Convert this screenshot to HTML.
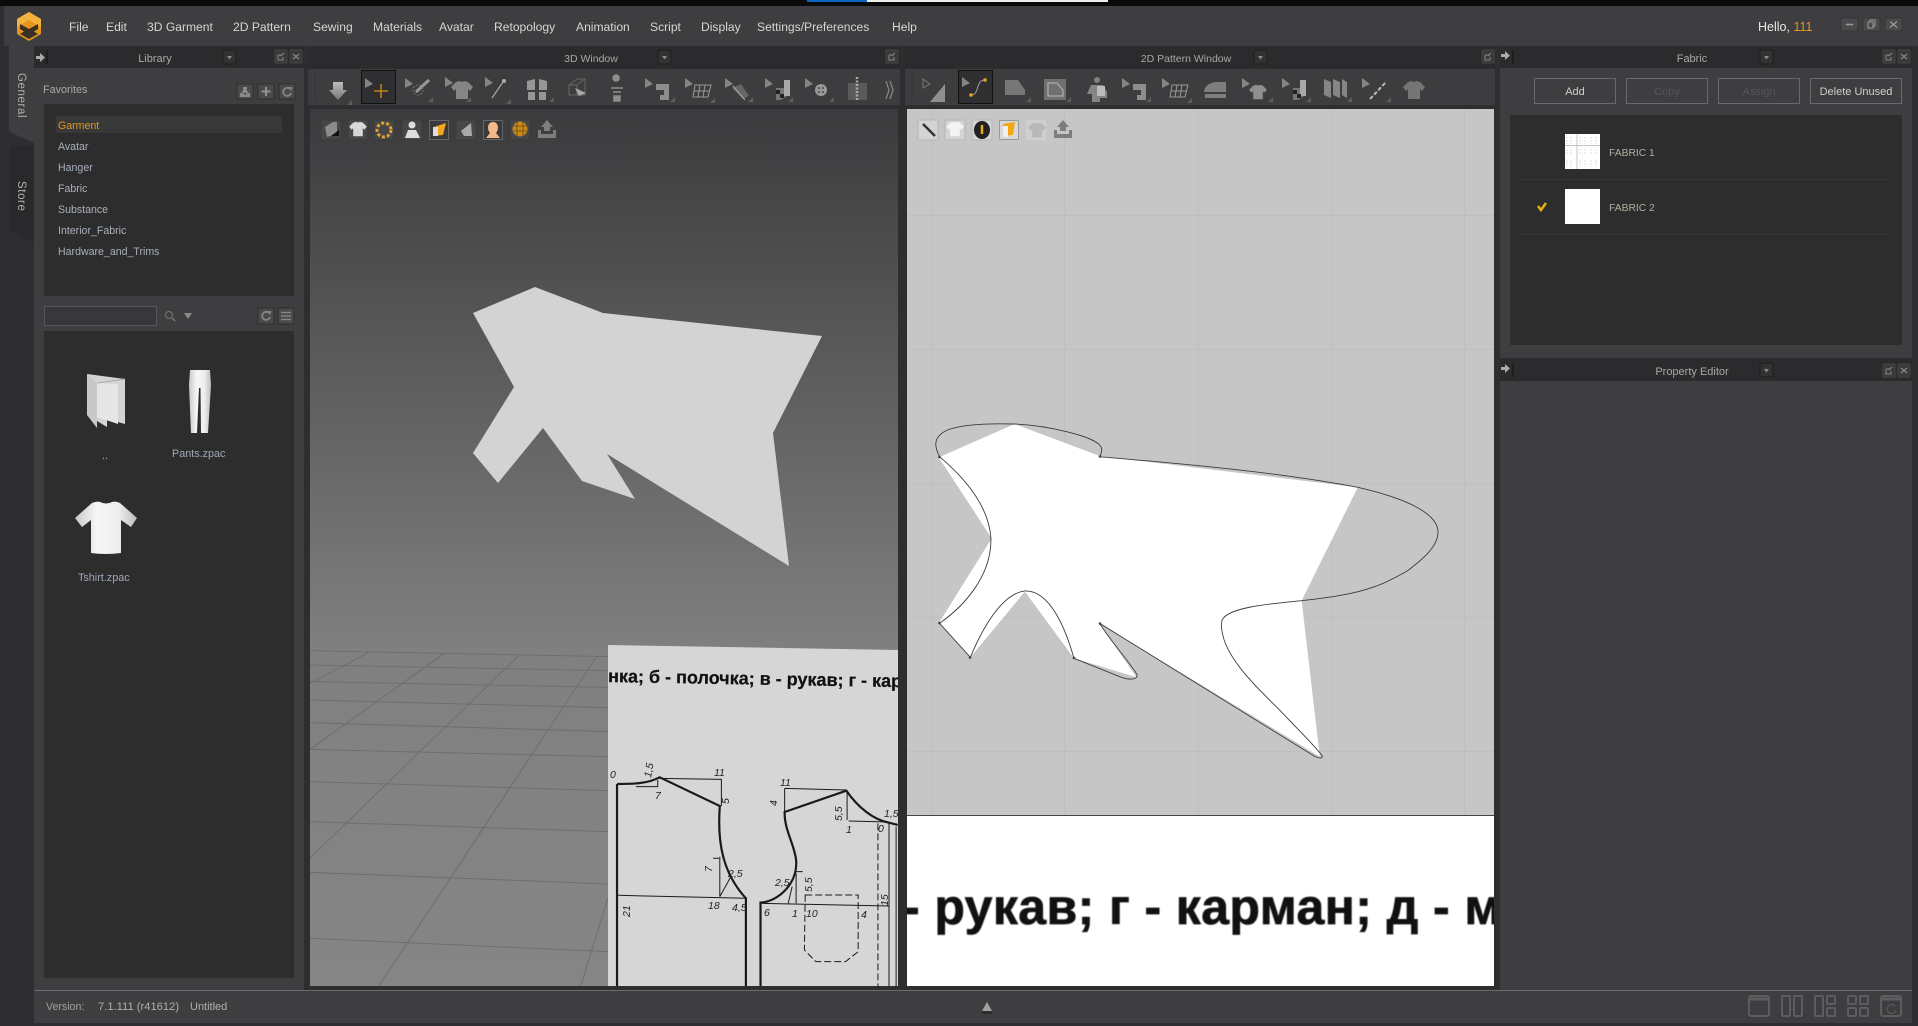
<!DOCTYPE html>
<html><head><meta charset="utf-8"><title>CLO</title>
<style>
html,body{margin:0;padding:0;background:#2e2e30;width:1918px;height:1026px;overflow:hidden}
body{position:relative;font-family:"Liberation Sans","Noto Sans CJK SC",sans-serif;font-size:11px;color:#b4b8bd}
.b{position:absolute}
.t{position:absolute;white-space:nowrap;line-height:14px}
.m{top:20px;font-size:12.1px;color:#d6d6d6}
.h{top:51.5px;font-size:11px;color:#a8a8a8;transform:translateX(-50%)}
.l{left:58px;color:#a9b0ba;font-size:10.6px}
.btn{position:absolute;top:78px;height:26px;border:1px solid #6a6a6c;box-sizing:border-box;text-align:center;line-height:26px;color:#cfcfcf;font-size:11px}
.dim{color:#555658}
svg{position:absolute;left:0;top:0}
</style></head><body>
<!-- top -->
<div class="b" style="left:0;top:0;width:1918px;height:6px;background:#0a0a0a"></div>
<div class="b" style="left:807px;top:0;width:60px;height:1.5px;background:#0a64c0"></div>
<div class="b" style="left:867px;top:0;width:241px;height:1.5px;background:#eee"></div>
<div class="b" style="left:4px;top:6px;width:1914px;height:40px;background:#3e3e40"></div>
<!-- left rail -->
<div class="b" style="left:0;top:46px;width:34px;height:980px;background:#2e2e30"></div>
<!-- library -->
<div class="b" style="left:34px;top:46px;width:270px;height:22px;background:#2b2b2d"></div>
<div class="b" style="left:34px;top:68px;width:270px;height:922px;background:#3e3e40"></div>
<div class="b" style="left:44px;top:104px;width:250px;height:192px;background:#2d2d2d"></div>
<div class="b" style="left:56px;top:116px;width:226px;height:17px;background:#383838"></div>
<div class="b" style="left:44px;top:306px;width:113px;height:20px;box-sizing:border-box;border:1px solid #565658;background:#38383a"></div>
<div class="b" style="left:44px;top:331px;width:250px;height:647px;background:#2d2d2d"></div>
<!-- 3D -->
<div class="b" style="left:309px;top:46px;width:591px;height:22px;background:#2b2b2d"></div>
<div class="b" style="left:308px;top:69px;width:592px;height:36px;background:#3d3d3f"></div>
<div class="b" style="left:310px;top:109px;width:588px;height:877px;background:linear-gradient(#3b3b3d 0,#808080 62%,#858585 100%)"></div>
<!-- 2D -->
<div class="b" style="left:905px;top:46px;width:590px;height:22px;background:#2b2b2d"></div>
<div class="b" style="left:905px;top:69px;width:590px;height:36px;background:#3d3d3f"></div>
<div class="b" style="left:907px;top:109px;width:587px;height:706px;background:#c6c6c6"></div>
<div class="b" style="left:907px;top:815px;width:587px;height:1px;background:#444"></div>
<div class="b" style="left:907px;top:816px;width:587px;height:170px;background:#fff;overflow:hidden">
 <div class="t" style="left:-4px;top:63px;font-size:50px;line-height:56px;font-weight:bold;color:#111;letter-spacing:.4px;-webkit-text-stroke:.7px #111;filter:blur(.4px)">- рукав; г - карман; д - м</div>
</div>
<!-- right -->
<div class="b" style="left:1500px;top:46px;width:412px;height:22px;background:#2b2b2d"></div>
<div class="b" style="left:1500px;top:68px;width:412px;height:290px;background:#3e3e40"></div>
<div class="b" style="left:1510px;top:115px;width:392px;height:230px;background:#2d2d2d"></div>
<div class="b" style="left:1520px;top:179px;width:372px;height:1px;background:#363638"></div>
<div class="b" style="left:1520px;top:234px;width:372px;height:1px;background:#363638"></div>
<div class="b" style="left:1565px;top:189px;width:35px;height:35px;background:#fff"></div>
<div class="b" style="left:1500px;top:359px;width:412px;height:22px;background:#2b2b2d"></div>
<div class="b" style="left:1500px;top:381px;width:412px;height:609px;background:#3e3e40"></div>
<!-- status -->
<div class="b" style="left:34px;top:990px;width:1878px;height:33px;background:#3e3e40;border-top:1px solid #6b6b6d;box-sizing:border-box"></div>

<svg width="1918" height="1026" viewBox="0 0 1918 1026">
<defs>
 <linearGradient id="ig" x1="0" y1="0" x2="0" y2="1"><stop offset="0" stop-color="#bcbcbc"/><stop offset="1" stop-color="#777"/></linearGradient>
 <linearGradient id="wg" x1="0" y1="0" x2="1" y2="0"><stop offset="0" stop-color="#c8c8c8"/><stop offset=".35" stop-color="#f6f6f6"/><stop offset=".7" stop-color="#eeeeee"/><stop offset="1" stop-color="#bdbdbd"/></linearGradient>
 <g id="ptr"><path d="M0 0L0 10L8 6Z" fill="#858585"/></g>
 <g id="cor"><path d="M5 0L5 5L0 5Z" fill="#5e5e5e"/></g>
 <g id="float"><rect x="0" y="0" width="12" height="13" rx="1" fill="#3a3a3c" stroke="#444"/><path d="M3 5H7M3 5V10H8V7M6 6L9 3" stroke="#888" fill="none"/></g>
 <g id="close"><rect x="0" y="0" width="12" height="13" rx="1" fill="#3a3a3c" stroke="#444"/><path d="M3 4L9 9M9 4L3 9" stroke="#888" stroke-width="1.2"/></g>
 <g id="drop"><rect x="0" y="0" width="13" height="14" rx="2" fill="#323234" stroke="#1d1d1d"/><path d="M4 6H9L6.5 9.5Z" fill="#8a8a8a"/></g>
 <g id="arr"><path d="M0 3H4V0L9 4.500L4 9V6H0Z" fill="#aaa"/></g>
 <g id="sq"><rect x="0" y="0" width="20" height="20" rx="1" fill="#474749" stroke="#3a3a3a"/></g>
 <g id="sq2"><rect x="0" y="0" width="20" height="20" rx="1" fill="#d4d4d4" stroke="#b5b5b5"/></g>
 <g id="tee"><path d="M-6 -8L-2 -9Q0 -7 2 -9L6 -8L11 -3L8 1L6 -1V9H-6V-1L-8 1L-11 -3Z"/></g>
 <clipPath id="p3"><rect x="310" y="109" width="588" height="877"/></clipPath>
 <clipPath id="pap"><path d="M608 645L898 650V986H608Z"/></clipPath>
</defs>

<!-- side tabs -->
<path d="M9 46H34V143L12 133Q9 131 9 127Z" fill="#3e3e40"/>
<path d="M9 152Q9 146 14 146H34V243L12 231Q9 229 9 226Z" fill="#29292b"/>
<text transform="translate(18,73) rotate(90)" font-size="11.500" fill="#b0b0b0" letter-spacing=".6" font-family="Liberation Sans">General</text>
<text transform="translate(18,181) rotate(90)" font-size="11.500" fill="#b0b0b0" letter-spacing=".6" font-family="Liberation Sans">Store</text>

<!-- logo -->
<path d="M29 12L41 19V34L29 41L17 34V19Z" fill="#e8951e"/>
<path d="M29 12L41 19V27L29 20L17 27V19Z" fill="#f2b23c"/>
<path d="M20 24L29 29L38 24V29L34 31.500L38 34L29 39L20 34L24 31.500L20 29Z" fill="#3b3026"/>

<!-- window controls -->
<g fill="#4a4a4c" stroke="#353537"><rect x="1841" y="18" width="17" height="13" rx="1"/><rect x="1863" y="18" width="17" height="13" rx="1"/><rect x="1885" y="18" width="17" height="13" rx="1"/></g>
<path d="M1846 24.500H1853" stroke="#9a9a9a" stroke-width="1.500"/>
<path d="M1868 22H1873V28H1868ZM1870 22V20H1875V26H1873" fill="none" stroke="#9a9a9a"/>
<path d="M1890 21.500L1897 27.500M1897 21.500L1890 27.500" stroke="#9a9a9a" stroke-width="1.300"/>

<!-- header widgets -->
<use href="#arr" x="36" y="53"/><path d="M47 50V64" stroke="#111"/>
<use href="#drop" x="223" y="50"/><use href="#float" x="275" y="50"/><use href="#close" x="290" y="50"/>
<use href="#drop" x="658" y="50"/><use href="#float" x="886" y="50"/>
<use href="#drop" x="1254" y="50"/><use href="#float" x="1482" y="50"/>
<use href="#arr" x="1501" y="51"/><path d="M1513 50V64" stroke="#111"/>
<use href="#drop" x="1760" y="50"/><use href="#float" x="1883" y="50"/><use href="#close" x="1898" y="50"/>
<use href="#arr" x="1501" y="364"/><path d="M1513 363V377" stroke="#111"/>
<use href="#drop" x="1760" y="363"/><use href="#float" x="1883" y="364"/><use href="#close" x="1898" y="364"/>

<!-- library icons -->
<g fill="#4a4a4c" stroke="#2d2d2d"><rect x="237" y="84" width="16" height="15"/><rect x="258" y="84" width="16" height="15"/><rect x="279" y="84" width="16" height="15"/><rect x="258" y="308" width="16" height="16"/><rect x="278" y="308" width="16" height="16"/></g>
<path d="M243 87H247V91H249L245 95L241 91H243ZM240 93V97H250V93" fill="#8a8a8a"/>
<path d="M266 87V96M261.500 91.500H270.500" stroke="#8f8f8f" stroke-width="2"/>
<path d="M290 89A4 4 0 1 0 291 93" fill="none" stroke="#858585" stroke-width="1.800"/><path d="M288 87H292V91Z" fill="#858585"/>
<path d="M269 313A4 4 0 1 0 270 317" fill="none" stroke="#858585" stroke-width="1.800"/><path d="M267 311H271V315Z" fill="#858585"/>
<path d="M281 312.500H291M281 316H291M281 319.500H291" stroke="#858585" stroke-width="1.500"/>
<circle cx="169" cy="315" r="3.500" fill="none" stroke="#777"/><path d="M172 318L175 321" stroke="#777" stroke-width="1.500"/>
<path d="M184 313H192L188 319Z" fill="#8a8a8a"/>

<!-- folder -->
<path d="M87 374L125 379V424L107 419V427L87 415Z" fill="#d4d4d4"/>
<path d="M97 383L118 384V424L97 417Z" fill="#e6e6e6"/>
<path d="M87 374L97 383V428L87 415Z" fill="#c8c8c8"/>
<path d="M97 383L125 379" stroke="#aaa"/>
<!-- pants -->
<path d="M190 370H210L211 385L208 433H201L200.500 388L199 388L197 433H191L189 385Z" fill="url(#wg)"/>
<!-- tshirt -->
<path d="M92 503Q97 501 100 502Q106 505 112 502Q116 501 120 503Q128 510 137 518L131 527L121 520V553Q106 555 91 553V520L82 527L75 518Q84 510 92 503Z" fill="url(#wg)"/>

<!-- 3D tool bar -->
<g id="tb3">
 <path d="M315 72V102" stroke="#353537"/>
 <path d="M333 82H343V90H347L338 100L329 90H333Z" fill="url(#ig)"/><use href="#cor" x="347" y="100"/>
 <rect x="361.500" y="70.500" width="34" height="33" fill="#2f2f31" stroke="#111"/>
 <use href="#ptr" x="365" y="78"/>
 <path d="M381 84V98M374 91H388" stroke="#d8921c" stroke-width="1.300"/>
 <use href="#ptr" x="405" y="78"/><path d="M416 92L429 80" stroke="#999" stroke-width="3"/><circle cx="418" cy="90" r="5" fill="none" stroke="#777" stroke-dasharray="2 1.500"/><use href="#cor" x="428" y="97"/>
 <use href="#ptr" x="445" y="77"/><use href="#tee" x="462" y="90" fill="#858585"/><use href="#cor" x="466" y="97"/>
 <use href="#ptr" x="485" y="77"/><path d="M492 98L503 82" stroke="#aaa" stroke-width="1.200"/><circle cx="504" cy="81" r="2" fill="#aaa"/><use href="#cor" x="506" y="99"/>
 <path d="M527 81L535 79V90H527ZM539 79L547 81V90H539ZM528 92H535V100H528ZM539 92H546V100H539Z" fill="#969696"/><use href="#cor" x="549" y="97"/>
 <path d="M569 85L577 79H585V95H569ZM569 85H577V95M577 85L585 79" fill="none" stroke="#666"/><path d="M575 88L586 93L579 96Z" fill="#aaa"/>
 <path d="M616 81a3 3 0 1 1 .1 0M611 88H623M613 92H621M614 96H620V101H614Z" stroke="#8d8d8d" fill="#8d8d8d" stroke-width="1.500"/>
 <use href="#ptr" x="645" y="78"/><path d="M656 84H669V100H660V95H664V90H656Z" fill="#8d8d8d"/><use href="#cor" x="670" y="97"/>
 <use href="#ptr" x="685" y="78"/><path d="M695 85H711L708 97H693ZM700 85L698 97M705 85L703 97M694 91H710" fill="none" stroke="#999"/><use href="#cor" x="710" y="98"/>
 <use href="#ptr" x="725" y="78"/><path d="M732 88L741 84L749 96L743 99Z" fill="#666"/><path d="M733 86L745 100" stroke="#aaa"/><use href="#cor" x="748" y="97"/>
 <use href="#ptr" x="765" y="78"/><path d="M776 88H787V96L781 100H776Z" fill="#777"/><path d="M784 80H790V96H784Z" fill="#aaa"/><path d="M776 90h4v4h-4zM780 94h4v4h-4z" fill="#222"/><use href="#cor" x="788" y="97"/>
 <use href="#ptr" x="805" y="78"/><circle cx="821" cy="90" r="6" fill="#999"/><circle cx="819" cy="88" r="1" fill="#444"/><circle cx="823" cy="88" r="1" fill="#444"/><circle cx="819" cy="92" r="1" fill="#444"/><circle cx="823" cy="92" r="1" fill="#444"/><use href="#cor" x="829" y="97"/>
 <rect x="848" y="83" width="19" height="17" fill="#5a5a5a"/><path d="M857 77V101" stroke="#aaa" stroke-width="2.500" stroke-dasharray="2 1.500"/>
 <path d="M886 81L889 90L886 99M890 81L893 90L890 99" fill="none" stroke="#858585" stroke-width="1.300"/>
</g>

<!-- 3D view floor -->
<g clip-path="url(#p3)">
<g transform="translate(300,630) scale(.3953,.3333)" fill="none" stroke="#6e6e6e" stroke-width="1">
 <path vector-effect="non-scaling-stroke" d="M25 62L780 80M25 105L780 122M25 155L780 172M25 210L780 233M25 278L780 305M25 358L780 380M25 455L780 482M25 575L780 605M25 727L780 762M25 925L780 965M175 67L25 160M365 70L25 358M555 75L25 685M750 80L200 1068M780 800L710 1068"/>
</g>
<!-- 3D pattern -->
<path d="M473 313L535 287L603 313L822 336L773 433L789 566L607 454L635 499L582 481L543 428L498 483L473 453L514 387Z" fill="#d3d3d3"/>
<!-- paper -->
<path d="M608 645L898 650V986H608Z" fill="#d6d6d6"/>
<g clip-path="url(#pap)">
 <text transform="translate(608,682) rotate(1)" font-size="18" font-weight="bold" fill="#111" stroke="#111" stroke-width=".25" font-family="Liberation Sans">нка; б - полочка; в - рукав; г - кар</text>
 <g transform="translate(300,630) scale(.3953,.3333)" fill="none" stroke="#1a1a1a">
  <path vector-effect="non-scaling-stroke" stroke-width="2.200" d="M802 462V1068M802 462C850 462 880 460 910 442L1062 528C1055 640 1070 730 1128 805V1068M1165 1068V818C1210 815 1260 760 1255 690C1250 640 1225 600 1226 546L1382 482C1410 530 1450 570 1490 578L1512 585"/>
  <path vector-effect="non-scaling-stroke" stroke-width="1" d="M805 796L1128 805M910 445L1066 448V528M1062 680V800M905 450V470H850M1226 475L1382 480M1226 475V546M1384 482V570M1388 573L1490 576M1165 820L1490 828M1490 578V1068M1508 590V1068M1045 685H1060M1062 800L1090 740M1235 820L1245 770M1255 820V730M1255 725H1272"/>
  <path vector-effect="non-scaling-stroke" stroke-width="1" stroke-dasharray="7 3" d="M1462 580V1068M1278 795H1412V965L1380 995H1305L1276 960Z"/>
 </g>
 <g font-size="10.500" font-style="italic" fill="#222" font-family="Liberation Sans">
  <text x="610" y="778">0</text><text transform="translate(651,778) rotate(-80)">1,5</text><text x="714" y="776">11</text><text x="655" y="799">7</text><text transform="translate(729,804) rotate(-90)">5</text><text transform="translate(712,872) rotate(-90)">7</text><text x="728" y="877">2,5</text><text x="708" y="909">18</text><text x="732" y="911">4,5</text><text transform="translate(630,917) rotate(-90)">21</text><text x="780" y="786">11</text><text transform="translate(777,806) rotate(-90)">4</text><text transform="translate(842,821) rotate(-90)">5,5</text><text x="884" y="817">1,5</text><text x="846" y="833">1</text><text x="878" y="832">0</text><text x="775" y="886">2,5</text><text transform="translate(812,892) rotate(-90)">5,5</text><text x="764" y="916">6</text><text x="792" y="917">1</text><text x="806" y="917">10</text><text x="861" y="918">4</text><text transform="translate(888,906) rotate(-90)">15</text>
 </g>
</g>
</g>

<!-- 3D overlay icons -->
<g>
 <use href="#sq" x="321" y="120"/><path d="M325 127L333 122H337V134L327 137Z" fill="#8c8c8c"/><path d="M331 136H339V130Z" fill="#111"/>
 <use href="#sq" x="348" y="120"/><use href="#tee" x="358" y="129" fill="#d8d8d8" transform="translate(71.600,25.800) scale(.8)"/>
 <use href="#sq" x="374" y="120"/><circle cx="384" cy="130" r="7" fill="none" stroke="#e0a530" stroke-width="3" stroke-dasharray="3 2"/>
 <use href="#sq" x="402" y="120"/><circle cx="412" cy="125" r="3.500" fill="#ddd"/><path d="M408 130H416L420 138H405Z" fill="#ddd"/>
 <rect x="429.500" y="120.500" width="19" height="19" fill="#3a3a3c" stroke="#666"/><path d="M434 127L446 123L443 135L433 136Z" fill="#f2a81c"/><path d="M433 127L438 127V136H433Z" fill="#ddd"/>
 <use href="#sq" x="456" y="120"/><path d="M461 131L471 123L472 136L464 136Z" fill="#aaa"/>
 <rect x="483.500" y="120.500" width="19" height="19" fill="#3a3a3c" stroke="#666"/><path d="M493 122C499 122 499 130 496 133L500 138H486L490 133C487 130 487 122 493 122Z" fill="#f5b888"/>
 <use href="#sq" x="510" y="120"/><circle cx="520" cy="129" r="7.500" fill="#c98a1c"/><path d="M513 126H527M513 131H527M517 122V136M523 122V136" stroke="#6b4a10" stroke-width=".8"/>
 <path d="M547 120L553 127H550V131H544V127H541ZM538 130V138H556V130H553V134H541V130Z" fill="#7d7d7d"/>
</g>

<!-- 2D toolbar -->
<g>
 <path d="M912 72V102" stroke="#353537"/>
 <path d="M923 79V88L930 84Z" fill="none" stroke="#777"/><path d="M930 102L945 84V102Z" fill="#909090"/>
 <rect x="958.500" y="70.500" width="34" height="33" fill="#2f2f31" stroke="#111"/>
 <use href="#ptr" x="962" y="77"/><path d="M971 95C980 95 975 80 985 80" fill="none" stroke="#999"/><circle cx="971" cy="95" r="1.800" fill="#f0a020"/><circle cx="985" cy="80" r="1.800" fill="#f0a020"/>
 <path d="M1005 80H1018L1025 90V95H1005Z" fill="#777"/><use href="#cor" x="1026" y="97"/>
 <rect x="1044" y="79" width="22" height="21" fill="#707070"/><path d="M1048 83H1057L1063 90V96H1048Z" fill="none" stroke="#bbb"/><use href="#cor" x="1066" y="97"/>
 <circle cx="1097" cy="80" r="3" fill="#808080"/><path d="M1091 85H1103L1107 92V98H1100V102H1092V94L1087 94Z" fill="#858585"/><path d="M1097 86H1105V96H1097Z" fill="#bbb"/>
 <use href="#ptr" x="1122" y="78"/><path d="M1133 84H1146V100H1137V95H1141V90H1133Z" fill="#8d8d8d"/><use href="#cor" x="1146" y="97"/>
 <use href="#ptr" x="1162" y="78"/><path d="M1172 85H1188L1185 97H1170ZM1177 85L1175 97M1182 85L1180 97M1171 91H1187" fill="none" stroke="#999"/><use href="#cor" x="1187" y="98"/>
 <path d="M1204 91Q1206 83 1216 82H1226V92H1204ZM1205 94H1226V98H1205Z" fill="#7e7e7e"/>
 <use href="#ptr" x="1242" y="78"/><use href="#tee" x="1258" y="92" fill="#8f8f8f" transform="translate(251.600,18.400) scale(.8)"/><use href="#cor" x="1268" y="97"/>
 <use href="#ptr" x="1282" y="78"/><path d="M1293 88H1304V96L1298 100H1293Z" fill="#777"/><path d="M1300 80H1306V96H1300Z" fill="#aaa"/><path d="M1293 90h4v4h-4zM1297 94h4v4h-4z" fill="#222"/><use href="#cor" x="1306" y="97"/>
 <path d="M1324 79L1331 82V98L1324 95ZM1333 79L1340 82V98L1333 95ZM1342 79L1347 82V98L1342 95Z" fill="#858585"/><use href="#cor" x="1347" y="97"/>
 <use href="#ptr" x="1362" y="78"/><path d="M1370 99L1386 82" stroke="#bbb" stroke-width="2" stroke-dasharray="4 2"/><use href="#cor" x="1386" y="97"/>
 <use href="#tee" x="1414" y="90" fill="#757575"/>
</g>

<!-- 2D grid -->
<path d="M931.500 109V815M1064.500 109V815M1198.500 109V815M1331.500 109V815M1464.500 109V815M907 215.500H1494M907 349.500H1494M907 483.500H1494M907 617.500H1494M907 751.500H1494" stroke="#bfbfbf" stroke-width="1" fill="none"/>
<!-- 2D overlay icons -->
<g>
 <use href="#sq2" x="918" y="120"/><path d="M923 124L935 136" stroke="#333" stroke-width="2.500"/>
 <use href="#sq2" x="945" y="120"/><use href="#tee" x="955" y="129" fill="#f4f4f4" transform="translate(191,25.800) scale(.8)"/>
 <use href="#sq2" x="972" y="120"/><ellipse cx="982" cy="130" rx="8" ry="9" fill="#222"/><path d="M982 125V134" stroke="#f0a820" stroke-width="2.500"/>
 <rect x="999.500" y="120.500" width="19" height="19" rx="1" fill="#d8d8d8" stroke="#999"/><path d="M1003 124L1015 122L1013 135L1003 136Z" fill="#f3a712"/><path d="M1003 126H1008V137H1003Z" fill="#f0f0f0"/>
 <rect x="1026" y="120" width="20" height="20" fill="#cfcfcf"/><use href="#tee" x="1037" y="130" fill="#b8b8b8" transform="translate(207.400,26) scale(.8)"/>
 <path d="M1063 120L1069 127H1066V131H1060V127H1057ZM1054 130V138H1072V130H1069V134H1057V130Z" fill="#7d7d7d"/>
</g>

<!-- 2D pattern -->
<g transform="translate(900,400) scale(.3953,.3333)">
 <path d="M98 172L290 72L505 168L1158 262L1016 602L1062 1070L505 670L598 832L440 775L316 575L178 772L98 670L232 415Z" fill="#fff"/>
 <path vector-effect="non-scaling-stroke" stroke="#3c3c3c" stroke-width=".9" fill="none" d="M100 170C85 135 85 110 120 90C160 72 230 70 290 72C370 76 505 110 510 145Q511 158 505 170C700 190 950 215 1158 262C1280 295 1360 340 1361 395C1362 440 1320 480 1283 513C1250 535 1215 555 1200 560C1150 582 1090 592 1016 602C950 610 830 620 815 660C810 675 815 700 820 720C840 790 900 860 960 930C1000 980 1060 1050 1068 1068C1070 1076 1060 1075 1050 1070L505 670C530 720 590 800 600 825C600 840 580 840 560 832L440 775C420 690 380 570 316 573C260 580 210 680 178 772L100 670C160 620 232 530 230 415C225 320 165 235 100 170Z"/>
</g>
<g fill="#444"><circle cx="939.500" cy="457" r="1.300"/><circle cx="1100" cy="456.500" r="1.300"/><circle cx="939.500" cy="623" r="1.300"/><circle cx="970" cy="657.500" r="1.300"/><circle cx="1074" cy="658" r="1.300"/><circle cx="1100" cy="623.500" r="1.300"/></g>

<!-- fabric thumb + check -->
<rect x="1565" y="134" width="35" height="35" fill="#fff"/>
<path d="M1565 145.500H1600M1577 134V169" stroke="#c4c4c4"/>
<g fill="none" stroke="#dedede" stroke-width="1" stroke-dasharray="2 1"><path d="M1567 137V144M1571 137V144M1580 137V144M1585 137V144M1591 137V144M1596 137V144M1567 149V155M1571 149V155M1580 149V155M1585 149V155M1591 149V155M1596 149V155M1567 160V167M1571 160V167M1580 160V167M1585 160V167M1591 160V167M1596 160V167"/></g>
<path d="M1538 206L1541 210L1546 203" fill="none" stroke="#e8b010" stroke-width="2.500"/>

<!-- status widgets -->
<path d="M987 1002L992 1011H982Z" fill="#a0a0a0"/><rect x="982" y="1011" width="10" height="3" fill="#2b2b2b"/>
<g fill="none" stroke="#5d5d5f" stroke-width="2">
 <rect x="1749" y="996" width="20" height="20" rx="2"/><path d="M1749 999H1769" stroke-width="3"/>
 <rect x="1782" y="996" width="8" height="20" rx="1"/><rect x="1794" y="996" width="8" height="20" rx="1"/>
 <rect x="1815" y="996" width="8" height="20" rx="1"/><rect x="1827" y="996" width="8" height="8" rx="1"/><rect x="1827" y="1008" width="8" height="8" rx="1"/>
 <rect x="1848" y="996" width="8" height="8" rx="1"/><rect x="1860" y="996" width="8" height="8" rx="1"/><rect x="1848" y="1008" width="8" height="8" rx="1"/><rect x="1860" y="1008" width="8" height="8" rx="1"/>
 <rect x="1881" y="996" width="20" height="20" rx="2"/><path d="M1881 999H1901" stroke-width="3"/>
 <path d="M1895 1006A4.500 4.500 0 1 0 1896 1010" stroke-width="1"/>
</g>
</svg>

<!-- text -->
<span class="t m" style="left:69px">File</span>
<span class="t m" style="left:106px">Edit</span>
<span class="t m" style="left:147px">3D Garment</span>
<span class="t m" style="left:233px">2D Pattern</span>
<span class="t m" style="left:313px">Sewing</span>
<span class="t m" style="left:373px">Materials</span>
<span class="t m" style="left:439px">Avatar</span>
<span class="t m" style="left:494px">Retopology</span>
<span class="t m" style="left:576px">Animation</span>
<span class="t m" style="left:650px">Script</span>
<span class="t m" style="left:701px">Display</span>
<span class="t m" style="left:757px">Settings/Preferences</span>
<span class="t m" style="left:892px">Help</span>
<span class="t m" style="left:1758px;color:#e8e8e8;font-size:12.5px">Hello, <span style="color:#e8961e">111</span></span>

<span class="t h" style="left:155px">Library</span>
<span class="t h" style="left:591px;font-size:10.5px">3D Window</span>
<span class="t h" style="left:1186px;font-size:10.5px">2D Pattern Window</span>
<span class="t h" style="left:1692px">Fabric</span>
<span class="t h" style="left:1692px;top:364.5px">Property Editor</span>

<span class="t" style="left:43px;top:83px;font-size:10.8px;color:#a8a8a8">Favorites</span>
<span class="t l" style="top:119px;color:#e09a1c">Garment</span>
<span class="t l" style="top:140px">Avatar</span>
<span class="t l" style="top:161px">Hanger</span>
<span class="t l" style="top:182px">Fabric</span>
<span class="t l" style="top:203px">Substance</span>
<span class="t l" style="top:224px">Interior_Fabric</span>
<span class="t l" style="top:245px">Hardware_and_Trims</span>
<span class="t" style="left:102px;top:449px;color:#a9b0ba">..</span>
<span class="t" style="left:172px;top:447px;font-size:10.8px;color:#a0a8b8">Pants.zpac</span>
<span class="t" style="left:78px;top:571px;font-size:10.8px;color:#a0a8b8">Tshirt.zpac</span>

<div class="btn" style="left:1534px;width:82px">Add</div>
<div class="btn dim" style="left:1626px;width:82px">Copy</div>
<div class="btn dim" style="left:1718px;width:82px">Assign</div>
<div class="btn" style="left:1810px;width:92px">Delete Unused</div>
<span class="t" style="left:1609px;top:146.500px;font-size:10.300px;color:#b0aea0">FABRIC 1</span>
<span class="t" style="left:1609px;top:201.500px;font-size:10.300px;color:#b0aea0">FABRIC 2</span>

<span class="t" style="left:46px;top:1000px;font-size:10.600px;color:#a0a0a0">Version:</span>
<span class="t" style="left:98px;top:1000px;font-size:11.200px;color:#b0b0b0">7.1.111 (r41612)</span>
<span class="t" style="left:190px;top:1000px;font-size:11px;color:#b0b0b0">Untitled</span>
</body></html>
